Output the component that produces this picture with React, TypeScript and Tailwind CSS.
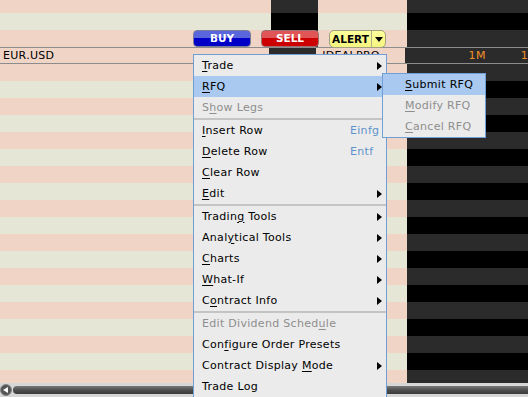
import React from "react";

/* ---------- colours ---------- */
const PINK = "bg-[#f0d5c7]";
const BEIGE = "bg-[#e6e6d6]";
const DGRAY = "bg-[#2b2b2b]";
const BLACK = "bg-black";

type Tone = "a" | "b";
interface Row {
  h: string;
  tone: Tone;
  kind?: "eur";
}

const rows: Row[] = [
  { h: "h-[13px]", tone: "a" },
  { h: "h-[17px]", tone: "b" },
  { h: "h-[17px]", tone: "a" },
  { h: "h-[17px]", tone: "a", kind: "eur" },
  { h: "h-[17px]", tone: "a" },
  ...Array.from({ length: 18 }, (_, i): Row => ({ h: "h-[17px]", tone: i % 2 === 0 ? "b" : "a" })),
];

/* mnemonic: '&' before the underlined char */
const Label = ({ text }: { text: string }) => {
  const i = text.indexOf("&");
  if (i < 0) return <>{text}</>;
  return (
    <>
      {text.slice(0, i)}
      <span className="underline underline-offset-2">{text[i + 1]}</span>
      {text.slice(i + 2)}
    </>
  );
};

const Arrow = () => (
  <span className="w-0 h-0 border-y-[4px] border-y-transparent border-l-[5px] border-l-black" />
);

type Item =
  | { sep: true }
  | { sep?: false; label: string; arrow?: boolean; disabled?: boolean; shortcut?: string; active?: boolean };

const menu: Item[] = [
  { label: "&Trade", arrow: true },
  { label: "&RFQ", arrow: true, active: true },
  { label: "S&how Legs", disabled: true },
  { sep: true },
  { label: "&Insert Row", shortcut: "Einfg" },
  { label: "&Delete Row", shortcut: "Entf" },
  { label: "&Clear Row" },
  { label: "&Edit", arrow: true },
  { sep: true },
  { label: "Tradin&g Tools", arrow: true },
  { label: "Anal&ytical Tools", arrow: true },
  { label: "&Charts", arrow: true },
  { label: "&What-If", arrow: true },
  { label: "C&ontract Info", arrow: true },
  { sep: true },
  { label: "Edit Dividend Sched&ule", disabled: true },
  { label: "Con&figure Order Presets" },
  { label: "Contract Display &Mode", arrow: true },
  { label: "Trade Log" },
];

const sub = [
  { label: "&Submit RFQ", active: true },
  { label: "&Modify RFQ", disabled: true },
  { label: "&Cancel RFQ", disabled: true },
];

export default function App() {
  return (
    <div className="relative w-[528px] h-[397px] overflow-hidden bg-[#d6d6d6] font-['DejaVu_Sans',sans-serif] text-[11px] tracking-[0.3px] text-black">
      {/* ===== grid ===== */}
      <div className="flex flex-col h-[383px] overflow-hidden">
        {rows.map((r, i) => {
          const light = r.tone === "a" ? PINK : BEIGE;
          const dark = r.tone === "a" ? DGRAY : BLACK;
          const eur = r.kind === "eur";
          return (
            <div
              key={i}
              className={`flex shrink-0 ${r.h} ${eur ? "border-y border-[#8c8c8c]" : ""}`}
            >
              <div className={`w-[271px] ${light} flex items-center pl-[3px] leading-none`}>
                {eur && "EUR.USD"}
              </div>
              <div className={`w-[47px] ${dark}`} />
              <div className={`w-[89px] ${light} flex items-center pl-[6px] leading-none`}>
                {eur && "IDEALPRO"}
              </div>
              <div className={`flex-1 ${dark} flex items-center leading-none text-[#f0902a]`}>
                {eur && (
                  <>
                    <span className="w-[81px] text-right">1M</span>
                    <span className="pl-[35px] whitespace-nowrap">1</span>
                  </>
                )}
              </div>
            </div>
          );
        })}
      </div>

      {/* ===== scrollbar ===== */}
      <div className="flex items-center h-[14px] bg-[#d6d6d6]">
        <div className="w-[12px] h-[12px] rounded-full bg-[#555] border border-[#888] flex items-center justify-center">
          <span className="w-0 h-0 border-y-[3px] border-y-transparent border-r-[5px] border-r-white mr-[1px]" />
        </div>
        <div className="flex-1 ml-[1px] h-[8px] rounded-l-full bg-gradient-to-b from-[#7a7a7a] via-[#4e4e4e] to-[#3c3c3c]" />
      </div>

      {/* ===== order buttons ===== */}
      <div className="absolute left-[193px] top-[30px] flex gap-[10px] font-bold leading-none tracking-normal text-[10.5px]">
        <div className="w-[58px] h-[17px] rounded-[4px] border border-[#7b7b9a] bg-gradient-to-b from-[#5a66dc] from-45% to-[#0000c6] to-45% flex items-center justify-center text-white">
          BUY
        </div>
        <div className="w-[58px] h-[17px] rounded-[4px] border border-[#a07070] bg-gradient-to-b from-[#e05656] from-45% to-[#cc0000] to-45% flex items-center justify-center text-white">
          SELL
        </div>
        <div className="w-[57px] h-[18px] rounded-[5px] border border-[#a0a080] bg-gradient-to-b from-[#ffff9a] to-[#f4f480] flex items-center text-black">
          <span className="w-[41px] text-center">ALERT</span>
          <span className="h-full border-l border-[#b0b090] flex-1 flex items-center justify-center">
            <span className="w-0 h-0 border-x-[4px] border-x-transparent border-t-[5px] border-t-black" />
          </span>
        </div>
      </div>

      {/* ===== context menu ===== */}
      <div className="absolute left-[193px] top-[54px] w-[194px] bg-[#ebebeb] border border-[#6f9fd6] flex flex-col">
        {menu.map((it, i) =>
          it.sep ? (
            <div key={i} className="h-[2px] bg-[#c4c4c4]" />
          ) : (
            <div
              key={i}
              className={`h-[21px] flex items-center pl-[8px] pr-[4px] pt-[1px] whitespace-nowrap ${
                it.active ? "bg-[#a9c9f0]" : ""
              } ${it.disabled ? "text-[#8e8e8e]" : ""}`}
            >
              <span className="flex-1">
                <Label text={it.label} />
              </span>
              <span className="w-[27px] text-[#5f93cc]">{it.shortcut}</span>
              <span className="w-[5px] flex items-center">{it.arrow && <Arrow />}</span>
            </div>
          )
        )}
      </div>

      {/* ===== RFQ submenu ===== */}
      <div className="absolute left-[382px] top-[73px] w-[104px] bg-[#ebebeb] border border-[#6f9fd6] flex flex-col">
        {sub.map((it, i) => (
          <div
            key={i}
            className={`h-[21px] flex items-center pl-[22px] pt-[1px] whitespace-nowrap ${
              it.active ? "bg-[#a9c9f0]" : ""
            } ${it.disabled ? "text-[#8e8e8e]" : ""}`}
          >
            <Label text={it.label} />
          </div>
        ))}
      </div>
    </div>
  );
}
